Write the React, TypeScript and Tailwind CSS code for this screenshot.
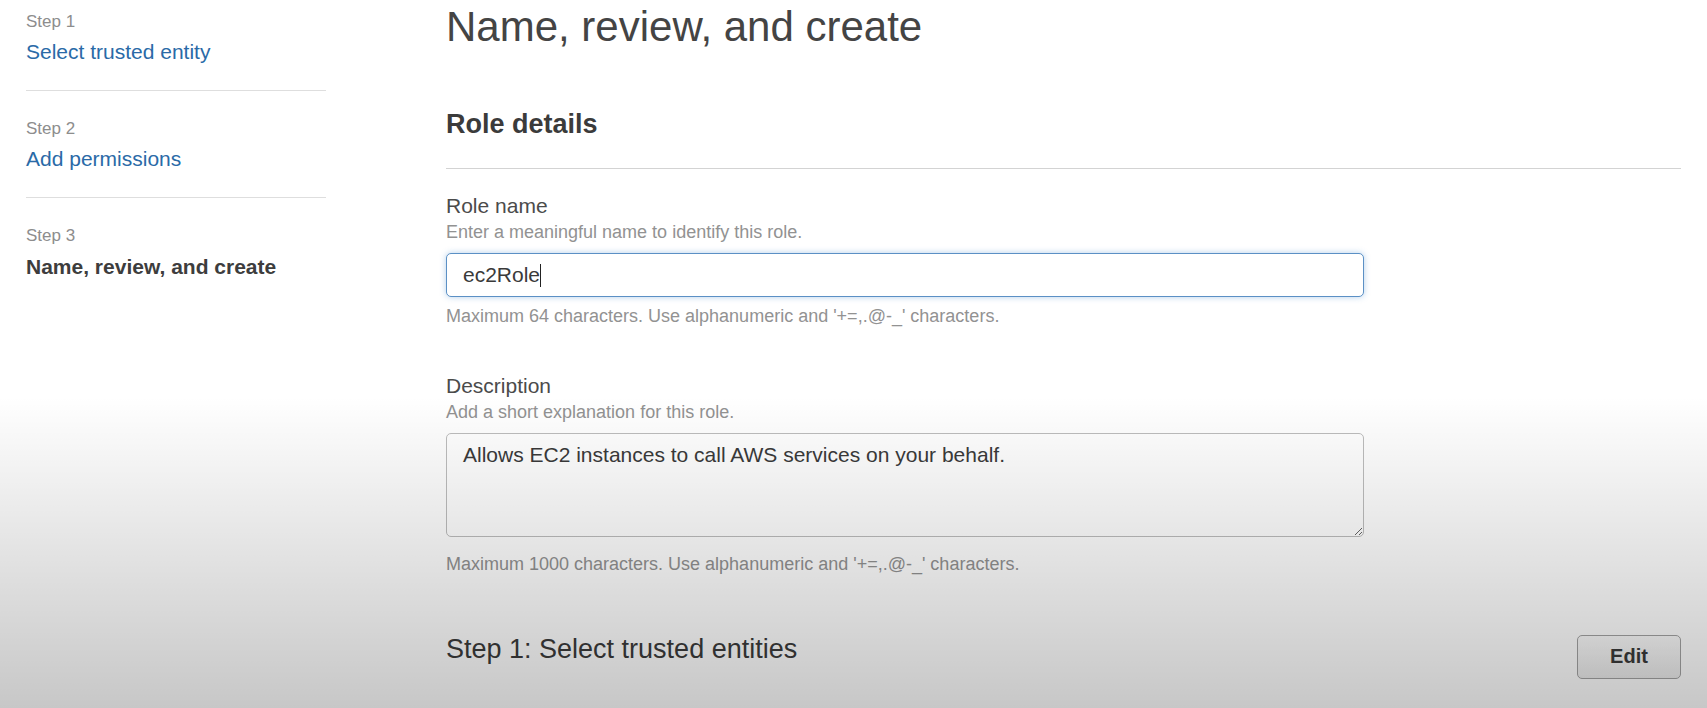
import React from 'react'

const steps = [
  { label: 'Step 1', title: 'Select trusted entity', active: false },
  { label: 'Step 2', title: 'Add permissions', active: false },
  { label: 'Step 3', title: 'Name, review, and create', active: true },
]

function Sidebar() {
  return (
    <nav className="w-[300px] shrink-0 ml-[26px] pt-[12px]">
      {steps.map((s, i) => (
        <div key={s.label} className={i > 0 ? 'mt-[28px]' : ''}>
          <p className="text-[17px] leading-[20px] text-[#8d8d8d]">{s.label}</p>
          {s.active ? (
            <p className="mt-[8px] text-[21px] leading-[26px] font-bold text-[#3d3d3d]">{s.title}</p>
          ) : (
            <a className="block mt-[7px] text-[21px] leading-[26px] text-[#2a6aa7]">{s.title}</a>
          )}
          {i < steps.length - 1 && <div className="mt-[25px] h-px bg-[#dedede]" />}
        </div>
      ))}
    </nav>
  )
}

function Field({ label, hint, children, note, noteGap }: { label: string; hint: string; children: React.ReactNode; note: string; noteGap: string }) {
  return (
    <div>
      <p className="text-[21px] leading-[24px] text-[#4b4b4b]">{label}</p>
      <p className="mt-[3px] text-[18px] leading-[22px] text-[#929292]">{hint}</p>
      <div className="mt-[10px]">{children}</div>
      <p className={`${noteGap} text-[18px] leading-[22px] text-[#929292]`}>{note}</p>
    </div>
  )
}

export default function App() {
  return (
    <div className="relative h-[708px] w-full overflow-hidden bg-white font-['Liberation_Sans',Arial,sans-serif] flex">
      <Sidebar />
      <main className="ml-[120px] w-[1235px] shrink-0 pt-[3px]">
        <h1 className="text-[42px] leading-[48px] text-[#444]">Name, review, and create</h1>
        <h2 className="mt-[57px] text-[27px] leading-[32px] font-bold text-[#3b3b3b]">Role details</h2>
        <div className="mt-[28px] h-px bg-[#d3d3d3]" />

        <div className="mt-[25px]">
          <Field
            label="Role name"
            hint="Enter a meaningful name to identify this role."
            note="Maximum 64 characters. Use alphanumeric and '+=,.@-_' characters."
            noteGap="mt-[8px]"
          >
            <div className="w-[918px] h-[44px] rounded-[5px] border border-[#5b90c5] shadow-[0_0_6px_rgba(40,120,200,0.35)] bg-white flex items-center px-4">
              <span className="text-[21px] leading-[24px] text-[#3a3a3a]">ec2Role</span>
              <span className="w-px h-[23px] bg-[#222]" />
            </div>
          </Field>
        </div>

        <div className="mt-[47px]">
          <Field
            label="Description"
            hint="Add a short explanation for this role."
            note="Maximum 1000 characters. Use alphanumeric and '+=,.@-_' characters."
            noteGap="mt-[16px]"
          >
            <textarea
              readOnly
              defaultValue="Allows EC2 instances to call AWS services on your behalf."
              className="block w-[918px] h-[104px] rounded-[5px] border border-[#bdbdbd] bg-white px-4 pt-[9px] text-[21px] leading-[24px] text-[#3a3a3a] outline-none"
            />
          </Field>
        </div>

        <div className="mt-[58px] flex items-start justify-between">
          <h3 className="text-[27px] leading-[32px] text-[#3b3b3b]">Step 1: Select trusted entities</h3>
          <button className="mt-[2px] w-[104px] h-[44px] rounded-[5px] border border-[#a3a3a3] bg-[linear-gradient(to_bottom,#fbfbfb,#ececec)] text-[20px] font-bold text-[#3a3a3a] pb-[2px]">
            Edit
          </button>
        </div>
      </main>
      <div className="pointer-events-none absolute inset-0 bg-[linear-gradient(to_bottom,rgba(0,0,0,0)_56%,rgba(0,0,0,0.22)_100%)]" />
    </div>
  )
}
